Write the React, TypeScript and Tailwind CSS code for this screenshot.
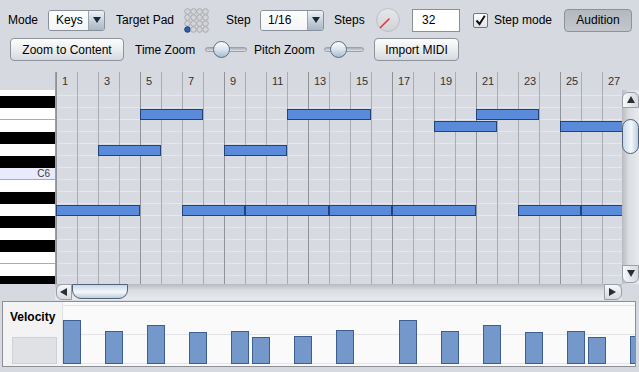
const COL = 21;
const ROW = 12;

// rows start at G6 (partially hidden), top = 84
const keys = [
  { n: 'G6', b: false },
  { n: 'F#6', b: true },
  { n: 'F6', b: false },
  { n: 'E6', b: false },
  { n: 'D#6', b: true },
  { n: 'D6', b: false },
  { n: 'C#6', b: true },
  { n: 'C6', b: false },
  { n: 'B5', b: false },
  { n: 'A#5', b: true },
  { n: 'A5', b: false },
  { n: 'G#5', b: true },
  { n: 'G5', b: false },
  { n: 'F#5', b: true },
  { n: 'F5', b: false },
  { n: 'E5', b: false },
  { n: 'D#5', b: true },
];

const notes = [
  { r: 2, c: 4, len: 3 },
  { r: 2, c: 11, len: 4 },
  { r: 2, c: 20, len: 3 },
  { r: 3, c: 18, len: 3 },
  { r: 3, c: 24, len: 3 },
  { r: 5, c: 2, len: 3 },
  { r: 5, c: 8, len: 3 },
  { r: 10, c: 0, len: 4 },
  { r: 10, c: 6, len: 3 },
  { r: 10, c: 9, len: 4 },
  { r: 10, c: 13, len: 3 },
  { r: 10, c: 16, len: 4 },
  { r: 10, c: 22, len: 3 },
  { r: 10, c: 25, len: 3 },
];

const velocity = [
  { c: 0, h: 43 },
  { c: 2, h: 32 },
  { c: 4, h: 38 },
  { c: 6, h: 31 },
  { c: 8, h: 32 },
  { c: 9, h: 26 },
  { c: 11, h: 27 },
  { c: 13, h: 33 },
  { c: 16, h: 43 },
  { c: 18, h: 32 },
  { c: 20, h: 38 },
  { c: 22, h: 31 },
  { c: 24, h: 32 },
  { c: 25, h: 26 },
  { c: 27, h: 27 },
];

const btn =
  'flex items-center justify-center rounded-[4px] border border-[#8e949c] bg-[linear-gradient(#fdfdfd,#e9ebee_55%,#d5d9df)] text-black';

function Combo({ value, width }: { value: string; width: string }) {
  return (
    <div className={`flex h-[21px] ${width} overflow-hidden rounded-[3px] border border-[#8a9099]`}>
      <div className="flex flex-1 items-center bg-[linear-gradient(#ffffff,#f3f4f6)] pl-[7px]">{value}</div>
      <div className="flex w-[16px] items-center justify-center border-l border-[#9aa3ae] bg-[linear-gradient(#eef2f7,#c2ccd8_60%,#aab6c4)]">
        <svg width="8" height="6" viewBox="0 0 8 6">
          <path d="M0 0h8L4 6z" fill="#1f2a36" />
        </svg>
      </div>
    </div>
  );
}

function Slider({ width, thumb }: { width: string; thumb: string }) {
  return (
    <div className={`relative h-[17px] ${width}`}>
      <div className="absolute inset-x-0 top-[6px] h-[5px] rounded-full border border-[#9ca1a8] bg-[linear-gradient(#a7acb3,#dfe2e6)]" />
      <div
        className={`absolute top-0 ${thumb} h-[17px] w-[17px] rounded-full border border-[#5a6d83] bg-[linear-gradient(#fbfdff,#d9e4ee_50%,#a9bccf)]`}
      />
    </div>
  );
}

function PadIcon() {
  const dots = [];
  for (let r = 0; r < 4; r++)
    for (let c = 0; c < 4; c++) {
      const blue = r === 3 && c === 0;
      dots.push(
        <circle
          key={`${r}-${c}`}
          cx={3.5 + c * 6}
          cy={3.5 + r * 6}
          r={2.8}
          fill={blue ? '#2c5fb5' : '#d2d4d8'}
          stroke={blue ? '#14336e' : '#a3a6ab'}
          strokeWidth="0.9"
        />,
      );
    }
  return (
    <svg width="25" height="25" viewBox="0 0 25 25">
      {dots}
    </svg>
  );
}

function Knob() {
  return (
    <svg width="24" height="24" viewBox="0 0 24 24">
      <defs>
        <linearGradient id="kg" x1="0" y1="0" x2="0" y2="1">
          <stop offset="0" stopColor="#e6e8eb" />
          <stop offset="1" stopColor="#cfd2d7" />
        </linearGradient>
      </defs>
      <circle cx="12" cy="12" r="11.4" fill="url(#kg)" stroke="#b4b8be" strokeWidth="0.8" />
      <line x1="13" y1="11" x2="4.5" y2="19.5" stroke="#e23a3a" strokeWidth="1.6" strokeLinecap="round" />
    </svg>
  );
}

function Arrow({ dir }: { dir: 'up' | 'down' | 'left' | 'right' }) {
  const d = {
    up: 'M0 7L4 0L8 7z',
    down: 'M0 0h8L4 7z',
    left: 'M7 0v8L0 4z',
    right: 'M0 0v8L7 4z',
  }[dir];
  return (
    <svg width="8" height="8" viewBox="0 0 8 8">
      <path d={d} fill="#2b2f35" />
    </svg>
  );
}

export default function App() {
  return (
    <div className="h-[372px] w-[639px] overflow-hidden bg-[#d6d9df] font-['Liberation_Sans',Arial,sans-serif] text-[12px] text-black">
      {/* toolbar row 1 */}
      <div className="flex h-[24px] items-center pt-[0px] mt-[8px]">
        <span className="w-[48px] pl-[8px]">Mode</span>
        <Combo value="Keys" width="w-[57px]" />
        <span className="w-[79px] pl-[11px]">Target Pad</span>
        <PadIcon />
        <span className="w-[51px] pl-[17px]">Step</span>
        <Combo value="1/16" width="w-[64px]" />
        <span className="w-[52px] pl-[10px]">Steps</span>
        <Knob />
        <div className="ml-[12px] flex h-[23px] w-[48px] items-center border border-[#8a8f97] bg-white pl-[9px]">32</div>
        <div className="ml-[13px] flex h-[15px] w-[15px] items-center justify-center rounded-[2px] border border-[#6f7680] bg-[linear-gradient(#ffffff,#dfe3e8)]">
          <svg width="11" height="11" viewBox="0 0 11 11">
            <path d="M1.5 5.5L4.5 9L9.8 0.8" fill="none" stroke="#111" strokeWidth="2" />
          </svg>
        </div>
        <span className="w-[76px] pl-[6px]">Step mode</span>
        <div className="flex h-[23px] w-[68px] items-center justify-center rounded-[4px] border border-[#8d939b] bg-[linear-gradient(#b3b8bf,#c3c7cd)]">
          Audition
        </div>
      </div>

      {/* toolbar row 2 */}
      <div className="mt-[6px] flex h-[23px] items-center pl-[10px]">
        <div className={`${btn} h-[23px] w-[114px]`}>Zoom to Content</div>
        <span className="w-[81px] pl-[11px]">Time Zoom</span>
        <Slider width="w-[42px]" thumb="left-[8px]" />
        <span className="w-[77px] pl-[7px]">Pitch Zoom</span>
        <Slider width="w-[40px]" thumb="left-[6px]" />
        <div className={`${btn} ml-[10px] h-[23px] w-[85px]`}>Import MIDI</div>
      </div>

      {/* piano roll */}
      <div className="mt-[11px] flex h-[228px]">
        {/* keyboard */}
        <div className="flex w-[55px] flex-col">
          <div className="h-[18px]" />
          <div className="h-[194px] overflow-hidden">
            <div className="mt-[-6px] flex flex-col">
              {keys.map((k, i) => {
                const nextWhite = i + 1 < keys.length && !keys[i + 1].b;
                return (
                  <div
                    key={k.n}
                    className={`flex h-[12px] items-center justify-end pr-[5px] text-[10px] leading-none text-[#3a3a3a] ${
                      k.b ? 'bg-black' : k.n === 'C6' ? 'bg-[#e9eafb]' : 'bg-white'
                    } ${!k.b && nextWhite ? 'border-b border-[#a9abaf]' : ''}`}
                  >
                    {k.n === 'C6' ? 'C6' : ''}
                  </div>
                );
              })}
            </div>
          </div>
        </div>

        <div className="flex flex-col">
          {/* header */}
          <div className="relative h-[18px] w-[567px] border-l border-[#9b9ea3] bg-[#d6d9df]">
            {Array.from({ length: 27 }, (_, i) => (
              <div
                key={i}
                className={`absolute top-0 h-[18px] w-px ${i % 4 === 0 ? 'bg-[#8f9296]' : 'bg-[#a9acb0]'}`}
                style={{ left: i * COL }}
              />
            ))}
            {Array.from({ length: 14 }, (_, i) => (
              <span
                key={i}
                className="absolute top-[2px] text-[11px] leading-[14px] text-[#333]"
                style={{ left: i * 2 * COL + 6 }}
              >
                {i * 2 + 1}
              </span>
            ))}
          </div>

          <div className="flex h-[194px]">
            {/* grid */}
            <div className="relative h-[194px] w-[567px] overflow-hidden border-l border-[#9b9ea3] bg-[#d7dae0]">
              <div className="flex flex-col">
                <div className="h-[6px] border-b border-[#e6e7ea]" />
                {keys.slice(1).map((k) => (
                  <div key={k.n} className="h-[12px] border-b border-[#e6e7ea]" />
                ))}
              </div>
              {Array.from({ length: 27 }, (_, i) => (
                <div
                  key={i}
                  className={`absolute top-0 h-[194px] w-px ${i % 4 === 0 ? 'bg-[#8f9296]' : 'bg-[#a9acb0]'}`}
                  style={{ left: i * COL }}
                />
              ))}
              {notes.map((n, i) => (
                <div
                  key={i}
                  className="absolute h-[11px] border border-[#22427a] bg-[#5a8bdb]"
                  style={{ left: n.c * COL, top: n.r * ROW - 5, width: n.len * COL }}
                />
              ))}
            </div>

            {/* vertical scrollbar */}
            <div className="flex w-[17px] flex-col bg-[linear-gradient(to_right,#b7bbc1,#dadde1_40%,#e8eaed)]">
              <div className="mt-[2px] flex h-[16px] items-center justify-center rounded-t-[6px] border border-[#9aa0a8] bg-[linear-gradient(to_right,#f7f8fa,#d6d9de)]">
                <Arrow dir="up" />
              </div>
              <div className="mt-[11px] h-[35px] rounded-[9px] border border-[#4f6479] bg-[linear-gradient(to_right,#c9d8e6,#f4f8fb_55%,#bccddd)]" />
              <div className="flex-1" />
              <div className="mb-[1px] flex h-[18px] items-center justify-center rounded-b-[6px] border border-[#9aa0a8] bg-[linear-gradient(to_right,#f7f8fa,#d6d9de)]">
                <Arrow dir="down" />
              </div>
            </div>
          </div>

          {/* horizontal scrollbar */}
          <div className="flex h-[16px] w-[567px] bg-[linear-gradient(#b7bbc1,#dadde1_40%,#e8eaed)]">
            <div className="ml-[1px] flex w-[16px] items-center justify-center rounded-l-[6px] border border-[#9aa0a8] bg-[linear-gradient(#f7f8fa,#d6d9de)]">
              <Arrow dir="left" />
            </div>
            <div className="h-[15px] w-[56px] rounded-b-[9px] border border-[#4f6479] bg-[linear-gradient(#c9d8e6,#f4f8fb_55%,#bccddd)]" />
            <div className="flex-1" />
            <div className="flex w-[18px] items-center justify-center rounded-r-[6px] border border-[#9aa0a8] bg-[linear-gradient(#f7f8fa,#d6d9de)]">
              <Arrow dir="right" />
            </div>
          </div>
        </div>
      </div>

      {/* velocity */}
      <div className="ml-[2px] mt-[1px] flex h-[66px] w-[634px] border border-[#8c9096] bg-[#fafafa]">
        <div className="flex w-[60px] flex-col bg-[#f3f3f4]">
          <span className="ml-[7px] mt-[8px] font-bold leading-[14px]">Velocity</span>
          <div className="ml-[9px] mt-[13px] h-[27px] w-[45px] border border-[#cfd1d4] bg-[#dfe1e5]" />
        </div>
        <div className="flex-1 border-l border-[#e2e3e6]">
          <svg width="572" height="64" viewBox="0 0 572 64">
            <line x1="0" y1="3.5" x2="572" y2="3.5" stroke="#e3e4e7" />
            <line x1="0" y1="32.5" x2="572" y2="32.5" stroke="#e3e4e7" />
            <line x1="0" y1="61.5" x2="572" y2="61.5" stroke="#e3e4e7" />
            {velocity.map((v) => (
              <rect
                key={v.c}
                x={v.c * COL + 0.5}
                y={61.5 - v.h}
                width={17}
                height={v.h}
                fill="#7598cb"
                stroke="#3e5d93"
                strokeWidth="1"
              />
            ))}
          </svg>
        </div>
      </div>
    </div>
  );
}
